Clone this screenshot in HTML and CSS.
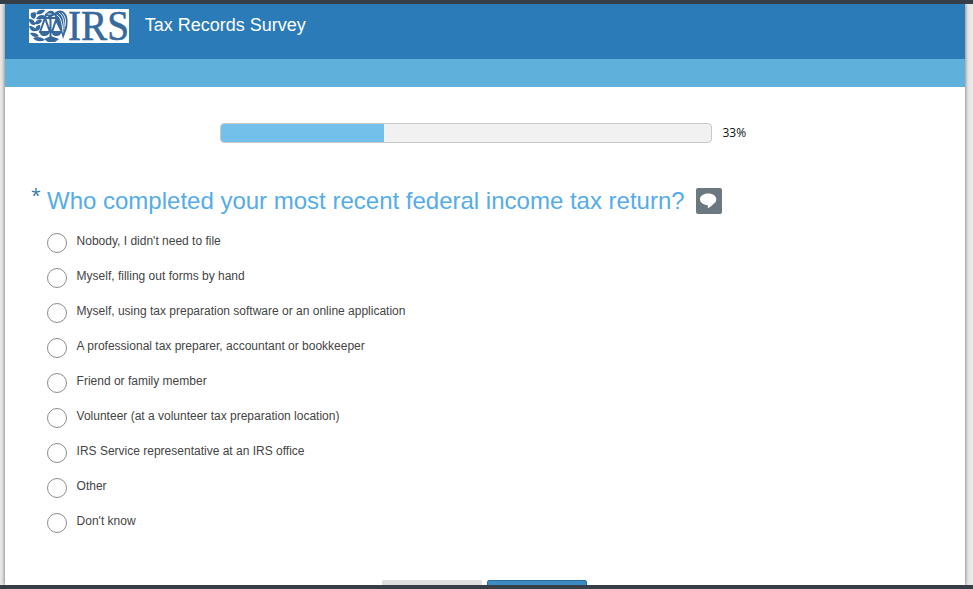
FILE: index.html
```html
<!DOCTYPE html>
<html lang="en">
<head>
<meta charset="utf-8">
<title>Tax Records Survey</title>
<link rel="stylesheet" href="styles.css">
</head>
<body>
<div class="sheet">
  <header class="header">
    <svg class="logo" viewBox="0 0 100 34" width="100" height="34" role="img" aria-label="IRS">
      <rect width="100" height="34" fill="#fff"/>
      <g fill="#36699d">
        <path d="M7 5c1-4 5-5 9-4-1 3-4 5-9 4zM7 10c2-4 6-5 10-3-2 3-6 4-10 3zM2 4l4-1c2 3 1 5-1 7C2 9 1 7 2 4zM0 10c4 0 6 2 6 6-4 0-6-2-6-6zM5 15c2-4 5-5 8-4-1 4-4 5-8 4zM0 17c4 0 7 2 7 5-4 1-6-1-7-5zM6 22c0-4 2-6 5-6 1 4-1 6-5 6zM1 24c4-1 7 0 9 3-3 2-7 1-9-3zM4 29c4-2 9-1 12 2-4 2-9 2-12-2z"/>
        <path d="M10 22h11c-1 4-3 5-6 5s-4-2-5-5zM22 22h11c-1 4-3 5-6 5s-4-2-5-5zM15 30l7-3 8 3-4 3h-7z"/>
        <path d="M16 5l4-3c4-1 6 1 6 4l-4 2-2 3-1-4-3 1z"/>
        <path d="M25 5c2-4 8-5 11-1 3 3 3 9 2 15l-4 11-2-8-5-12z"/>
      </g>
      <g fill="none" stroke="#36699d" stroke-width="2" stroke-linecap="round" stroke-linejoin="round">
        <path d="M16 9l-5 14M16 9l5 14M27 11l-4 12M27 11l6 12M21.500 8v22M14 9h13"/>
      </g>
      <path fill="none" stroke="#fff" stroke-width=".9" stroke-linecap="round" d="M28 6c4 2 5 8 6 17M30 4c5 3 5 9 5 16M33 4c4 4 4 8 3 13M19 5h3"/>
      <text class="logo-text" x="39" y="31.300" textLength="61" lengthAdjust="spacingAndGlyphs">IRS</text>
    </svg>
    <h1 class="title">Tax Records Survey</h1>
  </header>
  <div class="subbar"></div>
  <main class="content">
    <div class="progress">
      <div class="track"><div class="fill"></div></div>
      <span class="percent">33%</span>
    </div>
    <div class="question">
      <span class="star">*</span>
      <h2 class="prompt">Who completed your most recent federal income tax return?</h2>
      <span class="comment">
        <svg viewBox="0 0 26 26" width="26" height="26"><path fill="#fff" d="M12.200 5.500c4.700 0 8.100 2.400 8.100 5.800 0 2.200-1.300 4-3.300 5-1.200 1.900-3 3.100-5.500 3.900.6-1.200.6-2.200.2-3-4.300-.2-7.700-2.600-7.700-5.900s3.500-5.800 8.200-5.800z"/></svg>
      </span>
    </div>
    <div class="options">
      <label class="option"><input type="radio" name="who"><span>Nobody, I didn't need to file</span></label>
      <label class="option"><input type="radio" name="who"><span>Myself, filling out forms by hand</span></label>
      <label class="option"><input type="radio" name="who"><span>Myself, using tax preparation software or an online application</span></label>
      <label class="option"><input type="radio" name="who"><span>A professional tax preparer, accountant or bookkeeper</span></label>
      <label class="option"><input type="radio" name="who"><span>Friend or family member</span></label>
      <label class="option"><input type="radio" name="who"><span>Volunteer (at a volunteer tax preparation location)</span></label>
      <label class="option"><input type="radio" name="who"><span>IRS Service representative at an IRS office</span></label>
      <label class="option"><input type="radio" name="who"><span>Other</span></label>
      <label class="option"><input type="radio" name="who"><span>Don't know</span></label>
    </div>
    <div class="actions">
      <div class="button back"></div>
      <div class="button next"></div>
    </div>
  </main>
</div>
</body>
</html>
```
FILE: styles.css
```css
* { box-sizing: border-box; }
body {
  margin: 0;
  height: 589px;
  overflow: hidden;
  border-top: 4px solid #363f48;
  border-bottom: 4px solid #363f48;
  background: #e9e9e9;
  font-family: "Liberation Sans", Arial, sans-serif;
}
.sheet {
  width: 960px;
  height: 581px;
  margin-left: 5px;
  overflow: hidden;
  background: #fff;
  box-shadow: 0 0 4px rgba(0, 0, 0, .6);
}
.header {
  display: flex;
  align-items: flex-start;
  height: 55px;
  padding: 5px 24px 0;
  background: #2b7bb8;
}
.logo { display: block; overflow: visible; }
.logo-text {
  font: 43px "Liberation Serif", serif;
  fill: #36699d;
  stroke: #36699d;
  stroke-width: .6px;
}
.title {
  margin: 5px 0 0 15.7px;
  font-size: 18px;
  font-weight: 400;
  line-height: 22px;
  color: #fff;
}
.subbar { height: 28px; background: #60b0dc; }
.content { padding-top: 36px; }
.progress {
  display: flex;
  align-items: center;
  height: 20px;
  padding-left: 215px;
}
.track {
  width: 492px;
  height: 20px;
  overflow: hidden;
  border: 1px solid #c8c8c8;
  border-radius: 4px;
  background: #f1f1f1;
}
.fill { width: 163px; height: 100%; background: #73c1eb; }
.percent {
  margin: -2px 0 0 10.5px;
  font-family: "Open Sans", sans-serif;
  font-size: 12px;
  color: #111;
}
.question {
  display: flex;
  align-items: flex-start;
  height: 26px;
  margin-top: 45px;
  padding-left: 26px;
}
.star {
  width: 16px;
  font-family: "Open Sans", sans-serif;
  font-size: 18px;
  line-height: 14px;
  color: #347bb2;
}
.prompt {
  width: 649px;
  margin: 0;
  font-size: 24px;
  font-weight: 400;
  line-height: 26px;
  white-space: nowrap;
  color: #55ace9;
}
.comment {
  width: 26px;
  height: 26px;
  border-radius: 2px;
  background: #6c7880;
}
.comment svg { display: block; }
.options { margin-top: 19px; padding-left: 42px; }
.option {
  display: flex;
  align-items: flex-start;
  height: 35px;
  font-size: 12px;
  line-height: 16px;
  color: #444;
}
.option input {
  appearance: none;
  width: 20px;
  height: 20px;
  margin: 0 9.6px 0 0;
  border: 1px solid #8d8d8d;
  border-radius: 50%;
  background: #fff;
}
.actions {
  display: flex;
  gap: 5px;
  margin-top: 32px;
  padding-left: 377px;
}
.button { width: 100px; height: 30px; border-radius: 2px; }
.back { background: #dedede; }
.next { border: 1px solid #2e6f9f; background: #3e8bc4; }
```
